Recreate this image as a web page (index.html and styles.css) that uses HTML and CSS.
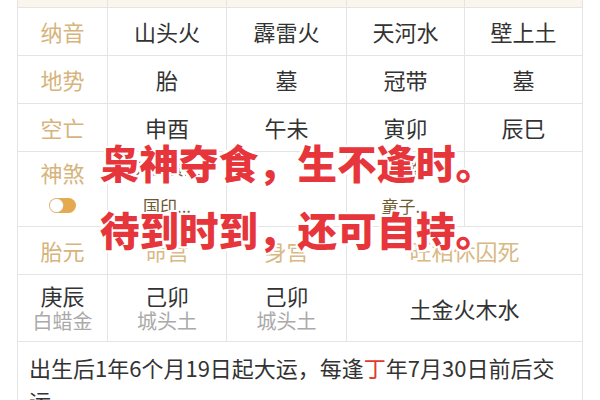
FILE: index.html
```html
<!DOCTYPE html>
<html lang="zh-CN">
<head>
<meta charset="utf-8">
<link rel="stylesheet" href="styles.css">
</head>
<body>
<div class="page">
  <table class="chart">
    <colgroup>
      <col class="c-label"><col class="c-a"><col class="c-b"><col class="c-c"><col class="c-d">
    </colgroup>
    <tr class="row-top"><td></td><td></td><td></td><td></td><td></td></tr>
    <tr class="row">
      <th class="label">纳音</th><td>山头火</td><td>霹雷火</td><td>天河水</td><td>壁上土</td>
    </tr>
    <tr class="row">
      <th class="label">地势</th><td>胎</td><td>墓</td><td>冠带</td><td>墓</td>
    </tr>
    <tr class="row">
      <th class="label">空亡</th><td>申酉</td><td>午未</td><td>寅卯</td><td>辰巳</td>
    </tr>
    <tr class="row-gods">
      <th class="label">
        <div class="label-stack">
          <span>神煞</span>
          <span class="toggle"><span class="knob"></span></span>
        </div>
      </th>
      <td><div class="gods"><span>天乙贵人</span><span>国印...</span></div></td>
      <td></td>
      <td><div class="gods"><span>劫煞</span><span>童子...</span></div></td>
      <td></td>
    </tr>
    <tr class="row">
      <th class="label">胎元</th><td class="gold">命宫</td><td class="gold">身宫</td><td class="gold" colspan="2">旺相休囚死</td>
    </tr>
    <tr class="row-pillar">
      <td><div class="pillar"><span class="gz">庚辰</span><span class="ny">白蜡金</span></div></td>
      <td><div class="pillar"><span class="gz">己卯</span><span class="ny">城头土</span></div></td>
      <td><div class="pillar"><span class="gz">己卯</span><span class="ny">城头土</span></div></td>
      <td colspan="2" class="wx">土金火木水</td>
    </tr>
    <tr>
      <td colspan="5" class="luck">出生后1年6个月19日起大运，每逢<span class="red">丁</span>年7月30日前后交运</td>
    </tr>
  </table>
  <div class="overlay">
    <p class="ov-line">枭神夺食，生不逢时。</p>
    <p class="ov-line">待到时到，还可自持。</p>
  </div>
</div>
</body>
</html>
```

FILE: styles.css
```css
* { box-sizing: border-box; }
html, body {
  margin: 0;
  padding: 0;
  background: #ffffff;
  width: 600px;
  height: 400px;
  overflow: hidden;
}
body {
  font-family: "Noto Sans CJK SC", "Noto Sans", sans-serif;
  color: #333333;
}
.page {
  position: relative;
  padding-left: 17px;
}
.chart {
  border-collapse: collapse;
  table-layout: fixed;
  width: 565px;
}
.c-label { width: 90px; }
.c-a { width: 119px; }
.c-b { width: 120px; }
.c-c { width: 118px; }
.c-d { width: 118px; }
.chart td, .chart th {
  border: 1.5px solid #e4e4e4;
  text-align: center;
  vertical-align: middle;
  padding: 0;
  font-weight: 400;
  font-size: 22px;
  line-height: 26px;
  color: #333333;
}
.row-top td {
  height: 7px;
  background: #faf6ee;
  border-top: none;
}
.row td, .row th { height: 48px; }
.label {
  color: #d6b47c !important;
}
.gold { color: #d8b983 !important; }
.row-gods td, .row-gods th { height: 75px; }
.label-stack {
  display: flex;
  flex-direction: column;
  align-items: center;
  gap: 13px;
  padding-bottom: 6px;
}
.toggle {
  display: inline-block;
  width: 27px;
  height: 15px;
  border-radius: 8px;
  background: #e5a94f;
  position: relative;
}
.knob {
  position: absolute;
  left: 1px;
  top: 1px;
  width: 13px;
  height: 13px;
  border-radius: 50%;
  background: #ffffff;
  box-shadow: 0 0 0 0.5px #d9d0c0;
}
.gods {
  display: flex;
  flex-direction: column;
  align-items: center;
  gap: 12px;
  font-size: 17px;
  line-height: 26px;
  color: #6e5830;
  padding-bottom: 4px;
}
.row-pillar td { height: 67px; }
.pillar {
  display: flex;
  flex-direction: column;
  align-items: center;
}
.gz { font-size: 22px; line-height: 26px; color: #333; }
.ny { font-size: 20px; line-height: 26px; color: #aaaaaa; }
.wx { font-size: 22px; }
.chart td.luck {
  text-align: left;
  font-size: 22px;
  line-height: 33px;
  padding: 9px 12px 0 11px;
  vertical-align: top;
  border-bottom: none;
}
.red { color: #e03a2e; }
.overlay {
  position: absolute;
  left: 100px;
  top: 128px;
}
.ov-line {
  margin: 0;
  font-size: 39.5px;
  line-height: 67px;
  font-weight: 900;
  color: #e6363b;
  white-space: nowrap;
  text-shadow:
    2px 0 0 #fff, -2px 0 0 #fff, 0 2px 0 #fff, 0 -2px 0 #fff,
    2px 2px 0 #fff, -2px -2px 0 #fff, 2px -2px 0 #fff, -2px 2px 0 #fff,
    0 0 4px rgba(255,255,255,0.9);
}
```
